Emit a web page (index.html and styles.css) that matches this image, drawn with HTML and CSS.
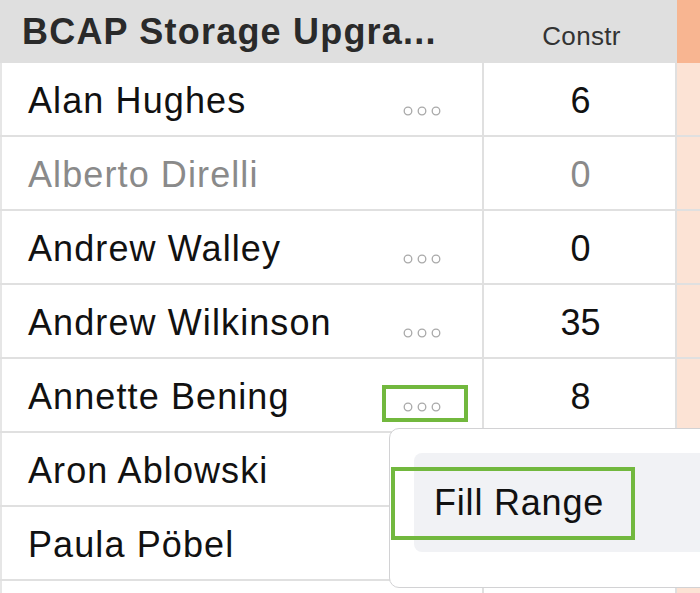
FILE: index.html
```html
<!DOCTYPE html>
<html lang="en">
<head>
    <meta charset="utf-8">
    <title>BCAP Storage Upgrade</title>
    <link rel="stylesheet" href="styles.css">
</head>
<body>
    <div class="sheet">
        <div class="row header">
            <div class="cell name-cell"><span class="title">BCAP Storage Upgra...</span></div>
            <div class="cell num-cell"><span class="col-title">Constr</span></div>
            <div class="cell extra-cell"></div>
        </div>

        <div class="row">
            <div class="cell name-cell"><span>Alan Hughes</span>
                <svg class="dots" width="38" height="10" viewBox="0 0 38 10"><circle cx="5" cy="5" r="3.8"/><circle cx="19" cy="5" r="3.8"/><circle cx="33" cy="5" r="3.8"/></svg>
            </div>
            <div class="cell num-cell">6</div>
            <div class="cell extra-cell"></div>
        </div>
        <div class="row muted">
            <div class="cell name-cell"><span>Alberto Direlli</span></div>
            <div class="cell num-cell">0</div>
            <div class="cell extra-cell"></div>
        </div>
        <div class="row">
            <div class="cell name-cell"><span>Andrew Walley</span>
                <svg class="dots" width="38" height="10" viewBox="0 0 38 10"><circle cx="5" cy="5" r="3.8"/><circle cx="19" cy="5" r="3.8"/><circle cx="33" cy="5" r="3.8"/></svg>
            </div>
            <div class="cell num-cell">0</div>
            <div class="cell extra-cell"></div>
        </div>
        <div class="row">
            <div class="cell name-cell"><span>Andrew Wilkinson</span>
                <svg class="dots" width="38" height="10" viewBox="0 0 38 10"><circle cx="5" cy="5" r="3.8"/><circle cx="19" cy="5" r="3.8"/><circle cx="33" cy="5" r="3.8"/></svg>
            </div>
            <div class="cell num-cell">35</div>
            <div class="cell extra-cell"></div>
        </div>
        <div class="row">
            <div class="cell name-cell"><span>Annette Bening</span>
                <svg class="dots" width="38" height="10" viewBox="0 0 38 10"><circle cx="5" cy="5" r="3.8"/><circle cx="19" cy="5" r="3.8"/><circle cx="33" cy="5" r="3.8"/></svg>
            </div>
            <div class="cell num-cell">8</div>
            <div class="cell extra-cell"></div>
        </div>
        <div class="row">
            <div class="cell name-cell"><span>Aron Ablowski</span></div>
            <div class="cell num-cell"></div>
            <div class="cell extra-cell"></div>
        </div>
        <div class="row">
            <div class="cell name-cell"><span>Paula Pöbel</span></div>
            <div class="cell num-cell"></div>
            <div class="cell extra-cell"></div>
        </div>
        <div class="row">
            <div class="cell name-cell"></div>
            <div class="cell num-cell"></div>
            <div class="cell extra-cell"></div>
        </div>

        <div class="highlight dots-highlight"></div>

        <div class="menu">
            <div class="menu-item">Fill Range</div>
        </div>
        <div class="highlight item-highlight"></div>
    </div>
</body>
</html>
```

FILE: styles.css
```css
body {
    margin: 0;
    font-family: "Liberation Sans", Arial, Helvetica, sans-serif;
    color: #111;
    background: #fff;
    overflow: hidden;
}
.sheet {
    position: relative;
    width: 700px;
    height: 593px;
    overflow: hidden;
}
.row {
    display: grid;
    grid-template-columns: 484px 193px 1fr;
    height: 74px;
    box-sizing: border-box;
    border-bottom: 2px solid #e0e0e0;
}
.cell {
    display: flex;
    align-items: center;
    box-sizing: border-box;
    padding-top: 4px;
}
.name-cell {
    justify-content: space-between;
    padding-left: 26px;
    padding-right: 41px;
    font-size: 36px;
    letter-spacing: 1.1px;
    border-left: 2px solid #e6e6e6;
    border-right: 2px solid #e0e0e0;
}
.num-cell {
    justify-content: center;
    font-size: 36px;
    padding-left: 2px;
    border-right: 2px solid #e0e0e0;
}
.extra-cell {
    background: #fce3d5;
}
.muted {
    color: #8a8a8a;
}
.dots {
    margin-top: 20px;
    fill: none;
    stroke: #a9a9a9;
    stroke-width: 1.3;
}

/* header */
.row.header {
    height: 63px;
    border-bottom: none;
    background: #dfdfdf;
}
.header .cell {
    border: none;
    padding-top: 0;
}
.header .name-cell {
    padding-left: 22px;
}
.title {
    font-size: 36px;
    font-weight: bold;
    letter-spacing: 1.2px;
    color: #2a2a2a;
}
.col-title {
    margin-top: 10px;
    font-size: 26px;
    color: #333;
    letter-spacing: 0.3px;
}
.header .extra-cell {
    background: #f8b591;
}

/* context menu */
.menu {
    position: absolute;
    left: 389px;
    top: 428px;
    width: 330px;
    height: 160px;
    box-sizing: border-box;
    padding: 24px 0 0 24px;
    background: #fff;
    border: 1.5px solid #d2d2d4;
    border-radius: 10px;
}
.menu-item {
    height: 99px;
    box-sizing: border-box;
    padding: 0 0 0 20px;
    display: flex;
    align-items: center;
    background: #f1f2f5;
    border-radius: 8px;
    font-size: 36px;
    letter-spacing: 0.8px;
    color: #111;
}

/* annotation boxes */
.highlight {
    position: absolute;
    box-sizing: border-box;
    border: 4px solid #72b83e;
}
.dots-highlight {
    left: 382px;
    top: 385px;
    width: 86px;
    height: 37px;
}
.item-highlight {
    left: 391px;
    top: 467px;
    width: 244px;
    height: 73px;
}
```
